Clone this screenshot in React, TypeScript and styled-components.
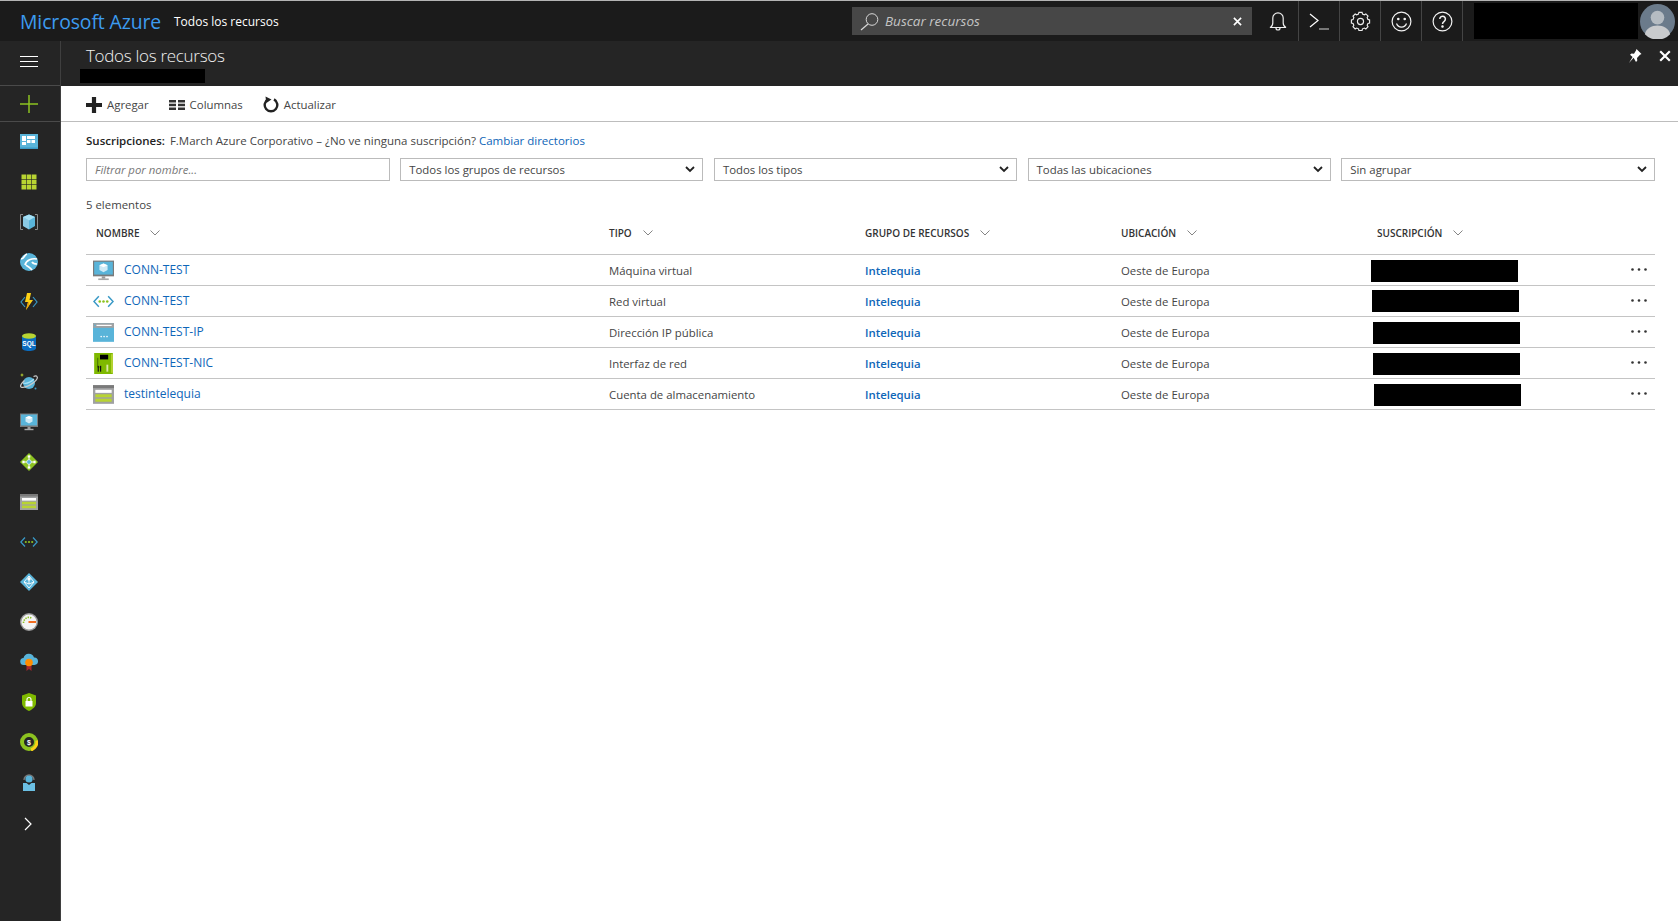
import React from "react";
import styled, { createGlobalStyle } from "styled-components";

const Global = createGlobalStyle`
  html, body { margin: 0; padding: 0; height: 100%; background: #fff; }
  * { box-sizing: border-box; }
  #root { height: 100%; }
  body { font-family: "Open Sans", "Noto Sans", "Liberation Sans", sans-serif; font-size: 11.4px; color: #454545; overflow: hidden; }
`;

const Page = styled.div`display:flex;flex-direction:column;width:1678px;height:921px;overflow:hidden;`;
const TopBar = styled.header`display:flex;align-items:stretch;height:41px;background:#1b1b1b;border-top:1px solid #b4b4b4;flex:none;`;
const Brand = styled.div`font-size:19.4px;color:#3d9bf0;margin-left:20px;line-height:41px;width:154px;white-space:nowrap;letter-spacing:-0.1px;`;
const Crumb = styled.div`font-size:12px;color:#fff;line-height:41px;width:678px;white-space:nowrap;`;
const SearchBox = styled.div`display:flex;align-items:center;width:400px;height:28px;margin-top:6px;background:#474747;padding:0 10px 0 8px;color:#d0d0d0;`;
const SearchText = styled.span`flex:1;font-style:italic;font-size:13.5px;line-height:30px;margin-left:6px;color:#c4c4c4;`;
const BarButtons = styled.div`display:flex;margin-left:6px;`;
const BarButton = styled.div`display:flex;align-items:center;justify-content:center;width:41px;height:40px;border-right:1px solid #444;color:#fff;`;
const AccountBlock = styled.div`width:164px;height:36px;margin:2px 2px 0 11px;background:#000;`;
const AvatarWrap = styled.div`width:35px;height:35px;margin-top:3px;`;

const Body = styled.div`display:flex;flex:1;min-height:0;`;
const Side = styled.nav`display:flex;flex-direction:column;width:61px;background:#252525;border-right:1px solid #3f3f3f;flex:none;`;
const SideCell = styled.div`display:flex;align-items:center;justify-content:center;padding-right:2px;`;
const MenuCell = styled(SideCell)`height:45px;padding-bottom:2px;border-bottom:1px solid #4a4a4a;`;
const AddCell = styled(SideCell)`height:36px;border-bottom:1px solid #4a4a4a;`;
const SideItem = styled(SideCell)`height:40px;flex:none;`;
const ExpandItem = styled(SideItem)`padding-top:3px;`;

const Main = styled.main`display:flex;flex-direction:column;flex:1;min-width:0;background:#fff;`;
const BladeHeader = styled.div`position:relative;height:45px;background:#252525;padding:3px 0 0 25px;flex:none;`;
const BladeTitle = styled.h1`margin:0;font-weight:300;font-size:17px;letter-spacing:-0.3px;line-height:24px;color:#f0f0f0;`;
const BladeRedact = styled.div`width:125px;height:14px;margin:1px 0 0 -6px;background:#000;`;
const BladeActions = styled.div`position:absolute;right:7px;top:8px;display:flex;align-items:center;gap:17px;color:#fff;`;
const Toolbar = styled.div`display:flex;align-items:center;height:36px;padding:2px 0 0 25px;border-bottom:1px solid #bdbdbd;gap:20px;flex:none;`;
const Tool = styled.div`display:flex;align-items:center;gap:5px;font-size:11.4px;color:#454545;`;
const Content = styled.div`flex:1;padding:11px 23px 0 25px;`;
const SubLine = styled.div`height:16px;line-height:16px;font-size:11.5px;white-space:nowrap;`;
const SubLabel = styled.strong`font-weight:600;margin-right:5px;color:#222;`;
const Link = styled.a`color:#0f66b8;text-decoration:none;`;
const Filters = styled.div`display:grid;grid-template-columns:303.8px repeat(3,303.3px) 1fr;gap:10.4px;margin-top:9px;`;
const Field = styled.div`display:flex;align-items:center;justify-content:space-between;height:23px;padding:0 7px 0 8px;border:1px solid #bbb;background:#fff;color:#454545;font-size:11.4px;`;
const FilterInput = styled(Field)`font-style:italic;color:#777;`;
const Count = styled.div`height:16px;line-height:16px;margin-top:16px;`;
const HeadRow = styled.div`display:grid;grid-template-columns:513px repeat(4,256px) 1fr;height:42px;padding-bottom:2px;align-items:center;border-bottom:1px solid #c4c4c4;`;
const HeadCell = styled.div`display:flex;align-items:center;gap:11px;padding-left:10px;font-size:10px;font-weight:600;color:#333;text-transform:uppercase;`;
const Row = styled.div`display:grid;grid-template-columns:513px repeat(4,256px) 1fr;height:31px;align-items:center;border-bottom:1px solid #c4c4c4;`;
const NameCell = styled.div`display:flex;align-items:center;padding-left:6px;`;
const IconSlot = styled.div`display:flex;justify-content:center;width:22px;margin-right:10px;`;
const NameLink = styled(Link)`font-size:12px;line-height:16px;margin-top:-1px;`;
const Cell = styled.div`padding-left:10px;white-space:nowrap;`;
const GroupLink = styled(Link)`font-weight:600;`;
const SubCell = styled.div`padding-left:10px;`;
const Redact = styled.div<{ $shift: number; $drop: number }>`width:147px;height:22px;background:#000;margin-left:${p => p.$shift}px;margin-top:${p => p.$drop}px;`;
const More = styled.div`display:flex;justify-content:flex-end;padding:0 8px 2px 0;`;

type S = { s?: number };
const Box: React.FC<S & { children: React.ReactNode }> = ({ s = 18, children }) => (
  <svg width={s} height={s} viewBox="0 0 18 18" style={{ display: "block" }}>{children}</svg>
);
const Dashboard = (p: S) => <Box {...p}><rect y="1" width="18" height="15" fill="#59b4d9"/><rect y="14.500" width="18" height="1.500" fill="#3999c6"/><rect x="2" y="3" width="4" height="9" fill="#fff"/><rect x="7" y="3" width="8" height="3" fill="#fff"/><rect x="7" y="7" width="3.500" height="3" fill="#fff"/><rect x="11.500" y="7" width="3.500" height="3" fill="#fff"/><rect x="2" y="8" width="4" height="1" fill="#59b4d9"/></Box>;
const Grid = (p: S) => <Box {...p}><g fill="#b8d432">{[1.5, 6.7, 11.9].flatMap(x => [1.5, 6.7, 11.9].map(y => <rect key={x + "-" + y} x={x} y={y} width="4.6" height="4.6"/>))}</g></Box>;
const Cube = (p: S) => <Box {...p}><path d="M3 1.500H.5v15H3M15 1.500h2.500v15H15" fill="none" stroke="#8a8a8a" strokeWidth="1"/><path d="M9 1.500l6 2.500v9l-6 3.500-6-3.500V4z" fill="#59b4d9"/><path d="M9 1.500l6 2.500L9 7.500 3 4z" fill="#a6e0f5"/><path d="M9 7.500v9L3 13V4z" fill="#fff" opacity=".3"/></Box>;
const Globe = (p: S) => <Box {...p}><circle cx="9" cy="9" r="9" fill="#59b4d9"/><path d="M1 6c3 0 3-4 6-5M5 12c1-5 7-7 12-6M6 12c2 2 4 2 6 5M12 9c1 2 3 2 5 2" fill="none" stroke="#fff" strokeWidth="1.700"/></Box>;
const Func = (p: S) => <Box {...p}><path d="M5 4L1 9l4 5M13 4l4 5-4 5" fill="none" stroke="#3999c6" strokeWidth="1.200"/><path d="M11 0H7L5 9h3l-2 8 7-10H9.500z" fill="#fcd116"/><path d="M8 9l-2 8 3-4.500V9z" fill="#e8a30f"/></Box>;
const Sql = (p: S) => <Box {...p}><path d="M2 3v12c0 2 3 3 7 3s7-1 7-3V3z" fill="#0a6cbf"/><ellipse cx="9" cy="3" rx="7" ry="2.800" fill="#b8d432"/><text x="9" y="12.500" textAnchor="middle" fontSize="6.500" fontWeight="700" fontFamily="'Liberation Sans', sans-serif" fill="#fff">SQL</text></Box>;
const Cosmos = (p: S) => <Box {...p}><circle cx="9" cy="10" r="6" fill="#59b4d9"/><path d="M3 10c4 1 7 0 11-4" fill="none" stroke="#a6e0f5" strokeWidth="1.200"/><path d="M4.500 7.500C1 10.500 0 13 1 14c2 1.500 8-1 12-4s5-5 4-6.500c-.5-.8-2-.7-3.500 0" fill="none" stroke="#c8c8c8" strokeWidth="1.300"/><path d="M2 0l.6 1.400L4 2l-1.400.6L2 4l-.6-1.400L0 2l1.400-.6z" fill="#b8d432"/><circle cx="15.500" cy="15.500" r="1" fill="#3999c6"/></Box>;
const Vm = (p: S) => <Box {...p}><rect y="0.500" width="18" height="13.500" fill="#7a7a7a"/><rect x="1" y="1.500" width="16" height="11" fill="#59b4d9"/><path d="M9 3l3.500 1.500v4L9 10.500l-3.500-2v-4z" fill="#cfeaf6"/><path d="M9 3l3.500 1.500L9 6.200 5.500 4.500z" fill="#fff"/><rect x="7.500" y="14" width="3" height="2" fill="#9a9a9a"/><rect x="4.500" y="15.800" width="9" height="1.400" fill="#a8a8a8"/></Box>;
const Balancer = (p: S) => <Box {...p}><path d="M9 0l9 9-9 9-9-9z" fill="#8cc220"/><path d="M9 2.500V15.500M2.500 9h13" stroke="#fff" strokeWidth="1"/><circle cx="9" cy="9" r="2.300" fill="#59b4d9" stroke="#fff" strokeWidth=".6"/><g fill="#fff"><rect x="7.700" y="2.500" width="2.600" height="2"/><rect x="7.700" y="13.500" width="2.600" height="2"/><rect x="2.500" y="7.700" width="2" height="2.600"/><rect x="13.500" y="7.700" width="2" height="2.600"/></g></Box>;
const Storage = (p: S) => <Box {...p}><rect y="1" width="18" height="16" fill="#a0a1a2"/><path d="M0 1h18v2.500H0z" fill="#7a7a7a"/><rect x="2" y="5" width="14" height="2.600" fill="#fff"/><rect x="2" y="8.800" width="14" height="2.600" fill="#b8d432"/><rect x="2" y="12.600" width="14" height="2.600" fill="#b8d432"/></Box>;
const Vnet = (p: S) => <Box {...p}><path d="M5 4.500L.8 9 5 13.500M13 4.500L17.200 9 13 13.500" fill="none" stroke="#3999c6" strokeWidth="1.300"/><g fill="#8cc220"><circle cx="5.800" cy="9" r="1.100"/><circle cx="9" cy="9" r="1.100"/><circle cx="12.200" cy="9" r="1.100"/></g></Box>;
const Aad = (p: S) => <Box {...p}><path d="M9 0l9 9-9 9-9-9z" fill="#59b4d9"/><path d="M9 3v8M9 11l-5-2M9 11l5-2M9 3L4 9l5 6 5-6z" fill="none" stroke="#fff" strokeWidth=".9"/><circle cx="9" cy="6" r="1.600" fill="#fff"/></Box>;
const Gauge = (p: S) => <Box {...p}><circle cx="9" cy="9" r="9" fill="#9a9a9a"/><circle cx="9" cy="9" r="7.600" fill="#f4f4f4"/><path d="M3.500 10a5.500 5.500 0 0 1 8-5" fill="none" stroke="#8cc220" strokeWidth="1.600" strokeDasharray="1.400 1"/><rect x="8.500" y="8" width="7.500" height="2" fill="#f26d21"/></Box>;
const Advisor = (p: S) => <Box {...p}><path d="M4 12a3.500 3.500 0 0 1-.5-7A5.500 5.500 0 0 1 14 4.500 3.700 3.700 0 0 1 14.500 12z" fill="#59b4d9"/><path d="M6.500 11v7l2.500-2 2.500 2v-7z" fill="#a4262c"/><circle cx="9" cy="9.500" r="3.800" fill="#ff8c00"/></Box>;
const Shield = (p: S) => <Box {...p}><path d="M9 0l7 2.500V10c0 4-4 6.500-7 8-3-1.500-7-4-7-8V2.500z" fill="#7fb900"/><rect x="5.500" y="8" width="7" height="5.500" fill="#fff"/><path d="M7 8V6.500a2 2 0 0 1 4 0V8" fill="none" stroke="#fff" strokeWidth="1.200"/></Box>;
const Cost = (p: S) => <Box {...p}><circle cx="9" cy="9" r="7" fill="#252525" stroke="#8cc220" strokeWidth="4"/><path d="M16.800 7.500A8.500 8.500 0 0 1 11 17" fill="none" stroke="#fcd116" strokeWidth="3"/><text x="9" y="11.600" textAnchor="middle" fontSize="7" fontWeight="700" fontFamily="'Liberation Sans', sans-serif" fill="#fff">$</text></Box>;
const Support = (p: S) => <Box {...p}><path d="M4 7a5 5 0 0 1 10 0" fill="none" stroke="#7a7a7a" strokeWidth="1.400"/><circle cx="9" cy="6" r="3.600" fill="#59b4d9"/><path d="M3 10h3.500L9 12l2.500-2H15v8H3z" fill="#6bc0e4"/></Box>;
const PublicIp = (p: S) => <Box {...p}><rect y="1" width="18" height="16" fill="#59b4d9"/><rect width="18" height="4" y="1" fill="#a0a1a2"/><rect x="3" y="2.400" width="13" height="1" fill="#fff"/><rect x="1" y="2.200" width="1.200" height="1.400" fill="#59b4d9"/><g fill="#fff"><circle cx="7" cy="12.500" r=".7"/><circle cx="9.500" cy="12.500" r=".7"/><circle cx="12" cy="12.500" r=".7"/></g></Box>;
const Nic = (p: S) => <Box {...p}><rect x="1" width="16" height="18" fill="#7fb900"/><rect x="15.500" y="1" width="1.500" height="16" fill="#b8d432"/><rect x="6" y="1.500" width="7" height="4" fill="#000"/><path d="M4 4v8h3" fill="none" stroke="#4f7a00" strokeWidth="1"/><g fill="#111"><rect x="4" y="11" width="1" height="5"/><rect x="6" y="11" width="1" height="5"/></g><rect x="11.500" y="10" width="1.600" height="6" fill="#dbe8a8"/></Box>;

const sideIcons = [Dashboard, Grid, Cube, Globe, Func, Sql, Cosmos, Vm, Balancer, Storage, Vnet, Aad, Gauge, Advisor, Shield, Cost, Support];

const Hamburger = () => <svg width="18" height="12" viewBox="0 0 18 12"><path d="M0 .5h18M0 5.500h18M0 10.500h18" stroke="#fff" strokeWidth="1"/></svg>;
const GreenPlus = () => <svg width="18" height="18" viewBox="0 0 18 18"><path d="M9 0v18M0 9h18" stroke="#8cc220" strokeWidth="1.500"/></svg>;
const SideChevron = () => <svg width="10" height="14" viewBox="0 0 10 14"><path d="M1 1l6 6-6 6" fill="none" stroke="#fff" strokeWidth="1.200"/></svg>;
const SearchIcon = () => <svg width="19" height="19" viewBox="0 0 19 19"><circle cx="12" cy="7.500" r="5.800" fill="none" stroke="#d8d8d8" strokeWidth="1"/><path d="M8 12L1 18" stroke="#d8d8d8" strokeWidth="1.200"/></svg>;
const CloseX = ({ s = 9, w = 1.800 }: { s?: number; w?: number }) => <svg width={s} height={s} viewBox="0 0 10 10"><path d="M1 1l8 8M9 1l-8 8" stroke="#fff" strokeWidth={w}/></svg>;
const Bell = () => <svg width="18" height="21" viewBox="0 0 18 21" fill="none" stroke="#eee" strokeWidth="1.200"><path d="M1 16.500c2-1 2.800-2 2.800-4.500V7a5.200 5.200 0 0 1 10.400 0v5c0 2.500.8 3.500 2.800 4.500z"/><path d="M7 17a2 2 0 0 0 4 0"/></svg>;
const Terminal = () => <svg width="20" height="17" viewBox="0 0 20 17"><path d="M1 1l8 6.500L1 14" fill="none" stroke="#fff" strokeWidth="1.200"/><path d="M10 16h10" stroke="#aaa" strokeWidth="1.300"/></svg>;
const Gear = () => <svg width="21" height="21" viewBox="0 0 24 24" fill="none" stroke="#eee" strokeWidth="1.300"><path d="M9.700 3.400l.5-1.900h3.600l.5 1.900 2.100.9 1.700-1 2.500 2.500-1 1.700.9 2.100 1.900.5v3.600l-1.900.5-.9 2.100 1 1.700-2.500 2.500-1.700-1-2.100.9-.5 1.900h-3.600l-.5-1.900-2.100-.9-1.700 1-2.500-2.500 1-1.700-.9-2.100-1.900-.5V10.200l1.900-.5.9-2.100-1-1.700 2.500-2.500 1.700 1z"/><circle cx="12" cy="12" r="3.500"/></svg>;
const Smile = () => <svg width="21" height="21" viewBox="0 0 21 21" fill="none" stroke="#f2f2f2" strokeWidth="1.200"><circle cx="10.500" cy="10.500" r="9.400"/><path d="M5.500 12.500a5.300 5.300 0 0 0 10 0"/><circle cx="7.300" cy="8" r=".7" fill="#fff"/><circle cx="13.700" cy="8" r=".7" fill="#fff"/></svg>;
const Help = () => <svg width="21" height="21" viewBox="0 0 21 21" fill="none" stroke="#f2f2f2" strokeWidth="1.200"><circle cx="10.500" cy="10.500" r="9.400"/><path d="M7.800 8a2.800 2.800 0 1 1 4.400 2.300c-1.200.8-1.700 1.400-1.700 2.700" strokeWidth="1.500"/><circle cx="10.500" cy="15.500" r=".7" fill="#fff"/></svg>;
const Avatar = () => <svg width="35" height="35" viewBox="0 0 36 36"><circle cx="18" cy="18" r="18" fill="#6b7b8b"/><circle cx="18" cy="14" r="7" fill="#b5bcc2"/><path d="M5 31c1-6 7-9 13-9s12 3 13 9a18 18 0 0 1-26 0z" fill="#c9cbcd"/></svg>;
const Pin = () => <svg width="13" height="14" viewBox="0 0 13 14"><path d="M7.500 0l5 5-1.500.7-3 3.300.3 2.500L7 13 4.600 8.800 0 14l3.600-6L1 5.800l1.500-1.300 2.500.3L7 1.500z" fill="#fff"/></svg>;
const DarkPlus = () => <svg width="16" height="16" viewBox="0 0 16 16"><path d="M8 0v16M0 8h16" stroke="#222" strokeWidth="4.200"/></svg>;
const ColumnsIcon = () => <svg width="16" height="10" viewBox="0 0 16 10"><g fill="#333"><rect width="7" height="2.500"/><rect x="9" width="7" height="2.500"/><rect y="3.700" width="7" height="2.500"/><rect x="9" y="3.700" width="7" height="2.500"/><rect y="7.500" width="7" height="2.500"/><rect x="9" y="7.500" width="7" height="2.500"/></g></svg>;
const Refresh = () => <svg width="16" height="17" viewBox="0 0 16 17"><path d="M11 3.400a6.300 6.300 0 1 1-6 0" fill="none" stroke="#222" strokeWidth="2.400"/><path d="M2.500.5l.8 6.500L8.500 3.500z" fill="#222"/></svg>;
const SelectChevron = () => <svg width="10" height="7" viewBox="0 0 10 7"><path d="M1 1l4 4 4-4" fill="none" stroke="#222" strokeWidth="1.800"/></svg>;
const SortChevron = () => <svg width="10" height="6" viewBox="0 0 10 6"><path d="M.5.5L5 5 9.500.5" fill="none" stroke="#777" strokeWidth=".9"/></svg>;
const Dots = () => <svg width="16" height="3" viewBox="0 0 16 3"><g fill="#333"><circle cx="1.500" cy="1.500" r="1.300"/><circle cx="8" cy="1.500" r="1.300"/><circle cx="14.500" cy="1.500" r="1.300"/></g></svg>;

const filters = ["Todos los grupos de recursos", "Todos los tipos", "Todas las ubicaciones", "Sin agrupar"];
const columns = ["Nombre", "Tipo", "Grupo de recursos", "Ubicación", "Suscripción"];
const rows = [
  { Icon: Vm, name: "CONN-TEST", type: "Máquina virtual", shift: -6, drop: 2 },
  { Icon: Vnet, name: "CONN-TEST", type: "Red virtual", shift: -5, drop: 0 },
  { Icon: PublicIp, name: "CONN-TEST-IP", type: "Dirección IP pública", shift: -4, drop: 2 },
  { Icon: Nic, name: "CONN-TEST-NIC", type: "Interfaz de red", shift: -4, drop: 2 },
  { Icon: Storage, name: "testintelequia", type: "Cuenta de almacenamiento", shift: -3, drop: 2 },
];

export default function App() {
  return (
    <Page>
      <Global />
      <TopBar>
        <Brand>Microsoft Azure</Brand>
        <Crumb>Todos los recursos</Crumb>
        <SearchBox>
          <SearchIcon />
          <SearchText>Buscar recursos</SearchText>
          <CloseX />
        </SearchBox>
        <BarButtons>
          <BarButton><Bell /></BarButton>
          <BarButton><Terminal /></BarButton>
          <BarButton><Gear /></BarButton>
          <BarButton><Smile /></BarButton>
          <BarButton><Help /></BarButton>
        </BarButtons>
        <AccountBlock />
        <AvatarWrap><Avatar /></AvatarWrap>
      </TopBar>
      <Body>
        <Side>
          <MenuCell><Hamburger /></MenuCell>
          <AddCell><GreenPlus /></AddCell>
          {sideIcons.map((I, i) => <SideItem key={i}><I /></SideItem>)}
          <ExpandItem><SideChevron /></ExpandItem>
        </Side>
        <Main>
          <BladeHeader>
            <BladeTitle>Todos los recursos</BladeTitle>
            <BladeRedact />
            <BladeActions><Pin /><CloseX s={12} w={1.800} /></BladeActions>
          </BladeHeader>
          <Toolbar>
            <Tool><DarkPlus />Agregar</Tool>
            <Tool><ColumnsIcon />Columnas</Tool>
            <Tool><Refresh />Actualizar</Tool>
          </Toolbar>
          <Content>
            <SubLine>
              <SubLabel>Suscripciones:</SubLabel>F.March Azure Corporativo – ¿No ve ninguna suscripción? <Link>Cambiar directorios</Link>
            </SubLine>
            <Filters>
              <FilterInput>Filtrar por nombre...</FilterInput>
              {filters.map(f => <Field key={f}>{f}<SelectChevron /></Field>)}
            </Filters>
            <Count>5 elementos</Count>
            <HeadRow>
              {columns.map(c => <HeadCell key={c}>{c}<SortChevron /></HeadCell>)}
            </HeadRow>
            {rows.map((r, i) => (
              <Row key={i}>
                <NameCell><IconSlot><r.Icon s={21} /></IconSlot><NameLink>{r.name}</NameLink></NameCell>
                <Cell>{r.type}</Cell>
                <Cell><GroupLink>Intelequia</GroupLink></Cell>
                <Cell>Oeste de Europa</Cell>
                <SubCell><Redact $shift={r.shift} $drop={r.drop} /></SubCell>
                <More><Dots /></More>
              </Row>
            ))}
          </Content>
        </Main>
      </Body>
    </Page>
  );
}
